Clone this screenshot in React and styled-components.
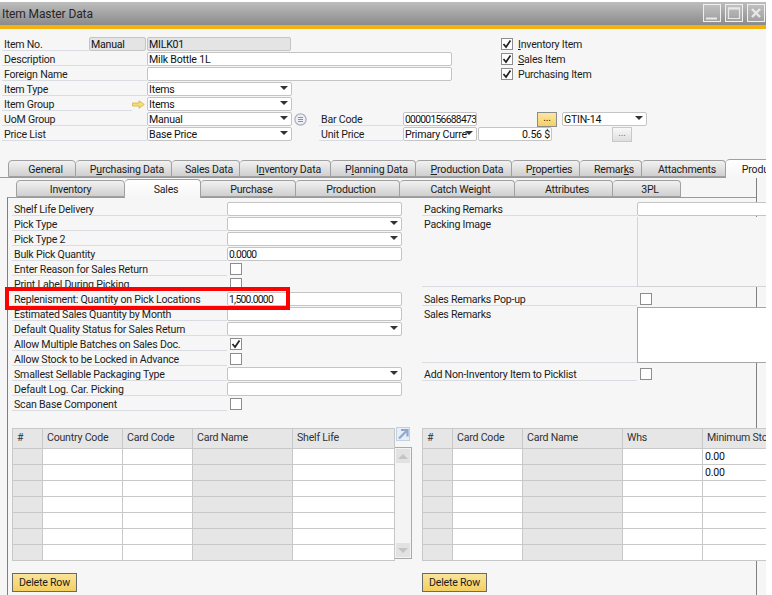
import React from "react";
import styled, { createGlobalStyle } from "styled-components";

const Global = createGlobalStyle`
  html, body { margin: 0; padding: 0; background: #fff; }
  body { font-family: Roboto, "Noto Sans", sans-serif; font-size: 10.6px; letter-spacing: -0.22px; color: #1c1c1c; }
  * { box-sizing: border-box; }
`;

const Win = styled.div`
  width: 766px; height: 593px; margin-top: 2px; background: #f6f6f6; overflow: hidden;
  display: flex; flex-direction: column;
`;
const TitleBar = styled.div`
  height: 27px; flex: none; display: flex; align-items: center; justify-content: space-between;
  padding: 0 1px 2px 2px;
  background: linear-gradient(#bdbdbd, #8b8b8b);
  border-bottom: 4px solid #f5b10e;
`;
const TitleText = styled.div`font-size: 12px; letter-spacing: -0.1px; color: #262626; padding-top: 2px;`;
const WinBtns = styled.div`display: flex; gap: 4px;`;
const WinBtn = styled.div`
  width: 18px; height: 18px; border: 1px solid #efefef; background: rgba(255,255,255,.12);
  display: flex; align-items: center; justify-content: center;
`;

const Head = styled.div`padding: 8px 0 0 2px; height: 130px; flex: none;`;
const HeadTop = styled.div`display: flex;`;
const HeadRows = styled.div`width: 498px; flex: none;`;
const Row = styled.div`
  height: 15px; display: flex; align-items: flex-start; position: relative;
`;
const Label = styled.div`
  width: ${p => p.$w}px; flex: none; height: 14px; line-height: 15px; padding-left: 2px; margin-left: ${p => p.$ml || 0}px;
  border-bottom: 1px solid #d9dde2; white-space: nowrap;
`;
const Field = styled.div`
  width: ${p => p.$w}px; flex: none; height: 14px; line-height: 14px; padding: ${p => (p.$num ? "0 0 0 1px" : "0 1px")}; margin-left: ${p => p.$ml || 0}px;
  background: ${p => (p.$off ? "#e4e4e4" : "#fff")};
  border: 1px solid #c4c4c4; border-radius: 2px; overflow: hidden; white-space: nowrap;
  text-align: ${p => (p.$right ? "right" : "left")}; color: #111; position: relative;
  ${p => p.$num && "font-size: 10.3px; letter-spacing: -0.7px;"}
`;
const Caret = styled.span`
  position: absolute; right: 3px; top: 3px; width: 0; height: 0;
  border-left: 4px solid transparent; border-right: 4px solid transparent; border-top: 4px solid #333;
`;
const Dots = styled.div`
  width: 20px; height: 15px; flex: none; margin-left: ${p => p.$ml}px; text-align: center; line-height: 10px; font-size: 10px;
  border: 1px solid ${p => (p.$on ? "#8b8b8b" : "#c8c8c8")};
  background: ${p => (p.$on ? "linear-gradient(#fbe7a4,#f5cf63)" : "linear-gradient(#f8f8f8,#dedede)")};
  color: ${p => (p.$on ? "#222" : "#777")};
`;
const Box = styled.div`
  width: 12px; height: 12px; flex: none; margin: 1px 0 0 ${p => p.$ml ?? 3}px;
  background: #fff; border: 1px solid #8d8d8d; display: flex; align-items: center; justify-content: center;
`;
const Checks = styled.div`display: flex; flex-direction: column;`;
const CheckRow = styled.div`height: 15px; display: flex; align-items: flex-start; gap: 5px; line-height: 15px;`;
const ArrowSlot = styled.div`
  width: 15px; height: 14px; flex: none; display: flex; align-items: center;
`;
const InfoSlot = styled(ArrowSlot)`margin-left: 2px;`;

const TabStrip = styled.div`
  display: flex; align-items: flex-end; height: 19px; flex: none; padding-left: 8px;
  border-bottom: 1px solid #9a9a9a; position: relative; white-space: nowrap;
`;
const Tab = styled.div`
  width: ${p => p.$w}px; flex: none; text-align: center; color: #1c1c1c;
  padding-left: ${p => (p.$flat ? 0 : 7)}px;
  height: ${p => (p.$on ? 19 : 17)}px; line-height: ${p => (p.$on ? 20 : 17)}px;
  margin-bottom: ${p => (p.$on ? -1 : 0)}px;
  border: 1px solid #a0a0a0; border-bottom: ${p => (p.$on ? "none" : "1px solid #a0a0a0")};
  border-left-width: ${p => (p.$first ? 1 : 0)}px;
  border-radius: 4px 4px 0 0;
  background: ${p => (p.$on ? "linear-gradient(#fff,#f6f6f6)" : "linear-gradient(#f2f2f2,#cfcfcf)")};
  position: relative; z-index: ${p => (p.$on ? 2 : 1)};
`;
const TabBody = styled.div`
  margin-left: 7px; width: 750px; flex: 1; border-right: 1px solid #808080; display: flex; flex-direction: column;
`;
const SubStrip = styled(TabStrip)`padding-left: 9px; border-bottom: 0; margin-bottom: 0;`;
const Content = styled.div`
  flex: 1; border-left: 1px solid #808080; border-top: 1px solid #9a9a9a; padding-top: 4px;
`;
const Cols = styled.div`display: flex; padding-left: 4px; gap: 20px; height: 226px;`;
const Col = styled.div`width: ${p => p.$w}px; flex: none;`;
const Tall = styled.div`
  height: ${p => p.$h}px; display: flex; align-items: stretch;
`;
const TallLabel = styled(Label)`height: ${p => p.$h}px;`;
const PlainImage = styled.div`
  width: 140px; flex: none; border-left: 1px solid #d4d4d4; border-bottom: 1px solid #d4d4d4; background: #f6f6f6;
  height: ${p => p.$h}px;
`;
const Memo = styled.div`
  width: 140px; flex: none; border: 1px solid #a6a6a6; background: #fff; height: ${p => p.$h}px;
`;
const Replen = styled.div`
  position: absolute; left: -7px; top: -5px; width: 285px; height: 23px; border: 4px solid #f00; pointer-events: none; z-index: 3;
`;

const Grids = styled.div`display: flex; padding-left: 4px;`;
const GridBlock = styled.div`width: 410px; flex: none;`;
const GridLine = styled.div`display: flex;`;
const Grid = styled.div`
  display: grid; grid-template-columns: ${p => p.$cols}; grid-auto-rows: 16px; grid-template-rows: 20px;
  border-top: 1px solid #c8c8c8; border-left: 1px solid #c8c8c8; flex: none;
`;
const Cell = styled.div`
  border-right: 1px solid #c8c8c8; border-bottom: 1px solid #c8c8c8; padding-left: ${p => (p.$h ? 4 : 2)}px;
  background: ${p => (p.$h || p.$off ? "#e6e6e6" : "#fff")}; white-space: nowrap; overflow: hidden;
  line-height: ${p => (p.$h ? 17 : 15)}px; color: ${p => (p.$h ? "#333" : "#111")};
`;
const Side = styled.div`width: 17px; flex: none; display: flex; flex-direction: column;`;
const Expand = styled.div`
  width: 14px; height: 14px; margin: -1px 0 6px 1px; background: #e8eef6; border: 1px solid #c2d0e4;
  display: flex; align-items: center; justify-content: center;
`;
const Scroll = styled.div`
  height: 112px; width: 17px; border: 1px solid #a9a9a9; border-left: none; background: #f4f4f4; padding: 1px 1px;
  display: flex; flex-direction: column; justify-content: space-between;
`;
const ScrollBtn = styled.div`
  height: 14px; background: #e2e2e2; display: flex; align-items: center; justify-content: center;
`;
const Tri = styled.span`
  width: 0; height: 0; border-left: 5px solid transparent; border-right: 5px solid transparent;
  ${p => (p.$up ? "border-bottom: 5px solid #c4c4c4;" : "border-top: 5px solid #c4c4c4;")}
`;
const DeleteBtn = styled.div`
  width: 65px; height: 19px; margin-top: 12px; text-align: center; line-height: 17px;
  border: 1px solid #6a6a6a; background: linear-gradient(#fae49a,#f4cf60);
`;

const Check = () => (
  <svg width="10" height="10" viewBox="0 0 10 10"><path d="M1.5 5 L4 8 L8.5 1.5" fill="none" stroke="#222" strokeWidth="1.7" /></svg>
);
const Cb = ({ on, ml }) => <Box $ml={ml}>{on && <Check />}</Box>;
const Sel = ({ w, ml, children }) => <Field $w={w} $ml={ml}>{children}<Caret /></Field>;

const mainTabs = [
  ["General", 68], [<>P<u>u</u>rchasing Data</>, 96], ["Sales Data", 68], [<>I<u>n</u>ventory Data</>, 91],
  [<>P<u>l</u>anning Data</>, 85], [<><u>P</u>roduction Data</>, 96], [<>P<u>r</u>operties</>, 68],
  [<>Remar<u>k</u>s</>, 62], ["Attachments", 84],
];
const subTabs = [["Inventory", 109], ["Sales", 76, true], ["Purchase", 95], ["Production", 104], ["Catch Weight", 115], ["Attributes", 98], ["3PL", 68]];

const leftRows = [
  ["Shelf Life Delivery", "f"], ["Pick Type", "s"], ["Pick Type 2", "s"], ["Bulk Pick Quantity", "f", "0.0000"],
  ["Enter Reason for Sales Return", "c"], ["Print Label During Picking", "c"],
  ["Replenisment: Quantity on Pick Locations", "f", "1,500.0000", true], ["Estimated Sales Quantity by Month", "f"],
  ["Default Quality Status for Sales Return", "s"], ["Allow Multiple Batches on Sales Doc.", "c", true],
  ["Allow Stock to be Locked in Advance", "c"], ["Smallest Sellable Packaging Type", "s"],
  ["Default Log. Car. Picking", "f"], ["Scan Base Component", "c"],
];

const DataGrid = ({ cols, heads, off, values = [] }) => (
  <Grid $cols={cols.map(c => c + "px").join(" ")}>
    {heads.map(h => <Cell key={h} $h>{h}</Cell>)}
    {Array.from({ length: 7 }).flatMap((_, r) =>
      heads.map((h, c) => (
        <Cell key={r + "-" + c} $off={c === 0 || c === off}>{h.startsWith("Minimum") && values[r]}</Cell>
      ))
    )}
  </Grid>
);

export default function App() {
  return (
    <>
      <Global />
      <Win>
        <TitleBar>
          <TitleText>Item Master Data</TitleText>
          <WinBtns>
            <WinBtn><svg width="14" height="14" viewBox="0 0 14 14"><path d="M1 12.5 H12" stroke="#e8e8e8" strokeWidth="2" /></svg></WinBtn>
            <WinBtn><svg width="14" height="14" viewBox="0 0 14 14"><path d="M1.5 2 H12.5 V12.5 H1.5 Z" fill="none" stroke="#e8e8e8" strokeWidth="1.2" /><path d="M1 2.5 H13" stroke="#e8e8e8" strokeWidth="2" /></svg></WinBtn>
            <WinBtn><svg width="14" height="14" viewBox="0 0 14 14"><path d="M3 3 L11 11 M11 3 L3 11" stroke="#e8e8e8" strokeWidth="2.4" /></svg></WinBtn>
          </WinBtns>
        </TitleBar>
        <Head>
          <HeadTop>
            <HeadRows>
              <Row><Label $w={87}>Item No.</Label><Field $w={57} $off>Manual</Field><Field $w={144} $ml={1} $off>MILK01</Field></Row>
              <Row><Label $w={145}>Description</Label><Field $w={305}>Milk Bottle 1L</Field></Row>
              <Row><Label $w={145}>Foreign Name</Label><Field $w={305} /></Row>
              <Row><Label $w={145}>Item Type</Label><Sel w={145}>Items</Sel></Row>
              <Row>
                <Label $w={130}>Item Group</Label>
                <ArrowSlot><svg width="13" height="9" viewBox="0 0 13 9"><path d="M0.5 3 H7 V0.7 L12.3 4.5 L7 8.3 V6 H0.5 Z" fill="#f7dd6d" stroke="#d8b23c" strokeWidth=".8" /></svg></ArrowSlot>
                <Sel w={145}>Items</Sel>
              </Row>
            </HeadRows>
            <Checks>
              <CheckRow><Cb on ml={1} /><span><u>I</u>nventory Item</span></CheckRow>
              <CheckRow><Cb on ml={1} /><span><u>S</u>ales Item</span></CheckRow>
              <CheckRow><Cb on ml={1} /><span>Purchasing Item</span></CheckRow>
            </Checks>
          </HeadTop>
          <Row>
            <Label $w={145}>UoM Group</Label><Sel w={145}>Manual</Sel>
            <InfoSlot>
              <svg width="13" height="13" viewBox="0 0 13 13"><circle cx="6.5" cy="6.5" r="5.6" fill="#eef0f6" stroke="#a9b0c4" strokeWidth="1.2" /><path d="M4 4.5 H9 M4 6.5 H9 M4 8.5 H9" stroke="#8a90a6" /></svg>
            </InfoSlot>
            <Label $w={84} $ml={10}>Bar Code</Label>
            <Field $w={74} $num>00000156688473</Field>
            <Dots $ml={60} $on>...</Dots>
            <Sel w={85} ml={5}>GTIN-14</Sel>
          </Row>
          <Row>
            <Label $w={145}>Price List</Label><Sel w={145}>Base Price</Sel>
            <Label $w={84} $ml={27}>Unit Price</Label>
            <Sel w={74}>Primary Curre</Sel>
            <Field $w={74} $ml={1} $right>0.56 $</Field>
            <Dots $ml={60}>...</Dots>
          </Row>
        </Head>
        <TabStrip>
          {mainTabs.map(([t, w], i) => <Tab key={i} $w={w} $first={i === 0}>{t}</Tab>)}
          <Tab $w={75} $on>Production</Tab>
        </TabStrip>
        <TabBody>
          <SubStrip>
            {subTabs.map(([t, w, on], i) => <Tab key={t} $w={w} $on={on} $first={i === 0} $flat={i === 0}>{t}</Tab>)}
          </SubStrip>
          <Content>
            <Cols>
              <Col $w={390}>
                {leftRows.map(([l, k, v, mark]) => (
                  <Row key={l}>
                    <Label $w={215}>{l}</Label>
                    {k === "f" && <Field $w={175} $num={!!v}>{v}</Field>}
                    {k === "s" && <Sel w={175} />}
                    {k === "c" && <Cb on={v} ml={3} />}
                    {mark && <Replen />}
                  </Row>
                ))}
              </Col>
              <Col $w={360}>
                <Row><Label $w={215}>Packing Remarks</Label><Field $w={140} /></Row>
                <Tall $h={75}>
                  <TallLabel $w={215} $h={70}>Packing Image</TallLabel>
                  <PlainImage $h={70} />
                </Tall>
                <Row><Label $w={215}>Sales Remarks Pop-up</Label><Cb ml={3} /></Row>
                <Tall $h={60}>
                  <TallLabel $w={215} $h={56}>Sales Remarks</TallLabel>
                  <Memo $h={56} />
                </Tall>
                <Row><Label $w={215}>Add Non-Inventory Item to Picklist</Label><Cb ml={3} /></Row>
              </Col>
            </Cols>
            <Grids>
              <GridBlock>
                <GridLine>
                  <DataGrid cols={[30, 80, 70, 100, 102]} heads={["#", "Country Code", "Card Code", "Card Name", "Shelf Life"]} off={3} />
                  <Side>
                    <Expand><svg width="12" height="12" viewBox="0 0 12 12"><path d="M2 10.5 L10 2.5 M4 2 H10.5 V8.5" fill="none" stroke="#8fa8d2" strokeWidth="2.2" /></svg></Expand>
                    <Scroll>
                      <ScrollBtn><Tri $up /></ScrollBtn>
                      <ScrollBtn><Tri /></ScrollBtn>
                    </Scroll>
                  </Side>
                </GridLine>
                <DeleteBtn>Delete Row</DeleteBtn>
              </GridBlock>
              <GridBlock>
                <DataGrid cols={[30, 70, 100, 80, 90]} heads={["#", "Card Code", "Card Name", "Whs", "Minimum Stock"]} off={2} values={["0.00", "0.00"]} />
                <DeleteBtn>Delete Row</DeleteBtn>
              </GridBlock>
            </Grids>
          </Content>
        </TabBody>
      </Win>
    </>
  );
}
